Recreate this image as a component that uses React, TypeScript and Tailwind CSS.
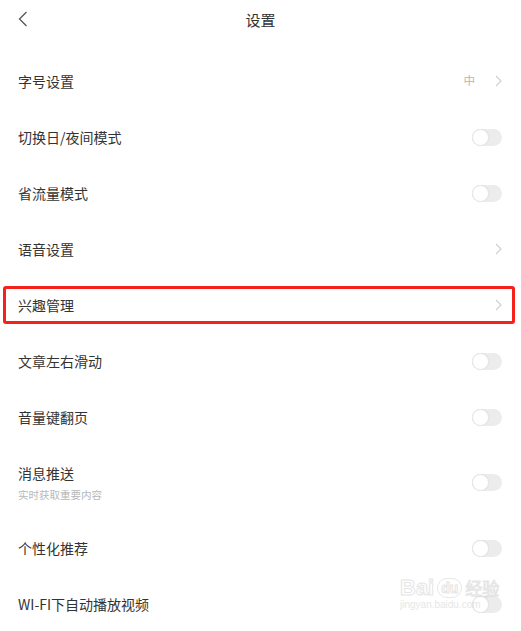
import { ReactNode } from "react";

type Item = {
  label: string;
  sub?: string;
  kind: "arrow" | "toggle";
  value?: string;
  highlight?: boolean;
};

const items: Item[] = [
  { label: "字号设置", kind: "arrow", value: "中" },
  { label: "切换日/夜间模式", kind: "toggle" },
  { label: "省流量模式", kind: "toggle" },
  { label: "语音设置", kind: "arrow" },
  { label: "兴趣管理", kind: "arrow", highlight: true },
  { label: "文章左右滑动", kind: "toggle" },
  { label: "音量键翻页", kind: "toggle" },
  { label: "消息推送", sub: "实时获取重要内容", kind: "toggle" },
  { label: "个性化推荐", kind: "toggle" },
  { label: "WI-FI下自动播放视频", kind: "toggle" },
];

function Chevron() {
  return (
    <svg width="7" height="12" viewBox="0 0 7 12" fill="none" className="block">
      <path d="M1 1l5 5-5 5" stroke="#cfcfcf" strokeWidth="1.1" />
    </svg>
  );
}

function Toggle() {
  return (
    <div className="w-[30px] h-[17px] rounded-full bg-[#ececec] flex items-center">
      <div className="w-[17px] h-[17px] rounded-full bg-white border border-[#e6e6e6] shadow-[0_0_1px_rgba(0,0,0,0.08)]" />
    </div>
  );
}

function Row({ item }: { item: Item }) {
  let right: ReactNode;
  if (item.kind === "toggle") {
    right = <Toggle />;
  } else {
    right = (
      <div className="flex items-center gap-[20px]">
        {item.value && <span className="text-[11.5px] text-[#b5b5b5]">{item.value}</span>}
        <Chevron />
      </div>
    );
  }

  return (
    <div
      className={`relative flex items-center justify-between pl-[18px] pr-[19px] ${
        item.sub ? "h-[75px]" : "h-[56px]"
      }`}
    >
      {item.highlight && (
        <div className="absolute left-[3px] right-[6px] top-[9px] bottom-[9px] border-[3px] border-[#f5221b] rounded-[3px]" />
      )}
      <div className="flex flex-col">
        <span className="text-[14px] leading-[20px] text-[#333333]">{item.label}</span>
        {item.sub && (
          <span className="text-[10.5px] leading-[14px] mt-[5px] text-[#b8b8b8]">{item.sub}</span>
        )}
      </div>
      {right}
    </div>
  );
}

export default function App() {
  return (
    <div
      className="relative w-[521px] h-[631px] overflow-hidden bg-white"
      style={{ fontFamily: '"Noto Sans CJK SC", "Noto Sans", sans-serif' }}
    >
      {/* header */}
      <div className="relative h-[40px] flex items-center justify-center">
        <svg
          width="10"
          height="16"
          viewBox="0 0 10 16"
          fill="none"
          className="absolute left-[18px] top-[11px]"
        >
          <path d="M8.5 1L1.5 8l7 7" stroke="#555" strokeWidth="1.3" />
        </svg>
        <span className="text-[15px] text-[#333333]">设置</span>
      </div>

      <div className="pt-[13px]">
        {items.map((item) => (
          <Row key={item.label} item={item} />
        ))}
      </div>

      {/* watermark */}
      <div className="absolute left-[400px] top-[577px] flex flex-col items-start opacity-60 pointer-events-none">
        <div className="flex items-center gap-[3px]">
          <span className="text-[22px] leading-[22px] font-bold text-white [-webkit-text-stroke:1px_#d4d4d4] font-['Liberation_Sans']">
            Bai
          </span>
          <span className="text-[14px] leading-[18px] font-bold text-white [-webkit-text-stroke:1px_#d4d4d4] border border-[#d8d8d8] rounded-full px-[3px] font-['Liberation_Sans']">
            du
          </span>
          <span className="text-[17px] leading-[22px] text-white [-webkit-text-stroke:1px_#d4d4d4]">经验</span>
        </div>
        <span className="text-[10px] leading-[12px] text-[#d6d6d6] font-['Liberation_Sans']">jingyan.baidu.com</span>
      </div>
    </div>
  );
}
